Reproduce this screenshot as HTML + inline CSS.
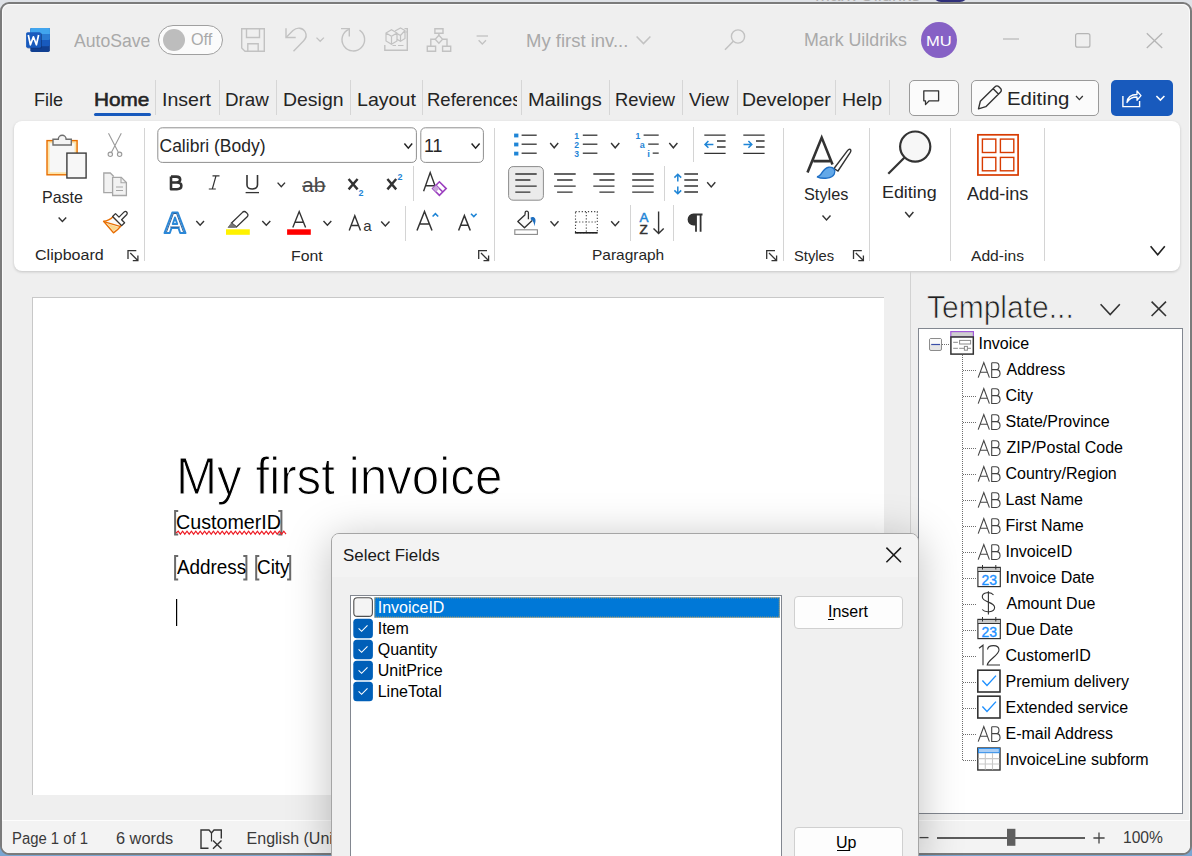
<!DOCTYPE html><html><head><meta charset="utf-8"><style>
*{margin:0;padding:0;box-sizing:border-box}
html,body{width:1192px;height:856px;overflow:hidden}
body{position:relative;background:#dfe2e7;font-family:"Liberation Sans",sans-serif}
.t{position:absolute;line-height:1;white-space:nowrap}
</style></head><body><div style="position:absolute;left:0px;top:0px;width:1192px;height:856px;background:#dfe2e7"></div>
<div style="position:absolute;left:0px;top:820px;width:1192px;height:36px;background:#7aa6d2"></div>
<div class="t" style="left:814.93px;top:-13.17px;font-size:17px;color:#b0b0b0;font-weight:normal;transform:scaleX(1.0722);transform-origin:0 0;">Mark Uildriks</div>
<div style="position:absolute;left:933px;top:-6px;width:35px;height:8px;border-radius:0 0 10px 10px;background:#2f2f7a"></div>
<div style="position:absolute;left:0px;top:2px;width:1192px;height:853px;background:#efefef;border:2px solid #7b7b7b;border-radius:9px"></div>
<div style="position:absolute;left:2px;top:4px;width:1188px;height:849px;border:1px solid #fbfbfb;border-radius:8px"></div>
<div class="t" style="left:73.50px;top:31.89px;font-size:18px;color:#a9a9a9;font-weight:normal;transform:scaleX(0.9779);transform-origin:0 0;">AutoSave</div>
<div style="position:absolute;left:158px;top:25px;width:65px;height:30px;border:1px solid #a0a0a0;border-radius:15px;background:#fbfbfb"></div>
<div style="position:absolute;left:163px;top:29px;width:22px;height:22px;border-radius:50%;background:#bdbdbd"></div>
<div class="t" style="left:190.59px;top:32.28px;font-size:16px;color:#a9a9a9;font-weight:normal;transform:scaleX(1.0143);transform-origin:0 0;">Off</div>
<div class="t" style="left:525.97px;top:31.79px;font-size:18px;color:#a9a9a9;font-weight:normal;transform:scaleX(1.0268);transform-origin:0 0;">My first inv...</div>
<div class="t" style="left:804.08px;top:32.41px;font-size:17.5px;color:#a9a9a9;font-weight:normal;transform:scaleX(1.0172);transform-origin:0 0;">Mark Uildriks</div>
<div style="position:absolute;left:921px;top:22px;width:36px;height:36px;border-radius:50%;background:#8661c5"></div>
<div class="t" style="left:926.43px;top:32.90px;font-size:15.5px;color:#fff;font-weight:normal;transform:scaleX(1.0682);transform-origin:0 0;">MU</div>
<svg style="position:absolute;left:0;top:0" width="1192" height="856" viewBox="0 0 1192 856"><rect x="30.3" y="27.9" width="19.6" height="24" rx="1.6" fill="#103f91"/><rect x="30.3" y="27.9" width="19.6" height="18.3" rx="1.6" fill="#185abd"/><rect x="30.3" y="27.9" width="19.6" height="12.2" rx="1.6" fill="#2b7cd3"/><path d="M31.9 27.9 H48.3 A1.6 1.6 0 0 1 49.9 29.5 V34 H30.3 V29.5 A1.6 1.6 0 0 1 31.9 27.9Z" fill="#41a5ee"/><rect x="27" y="33" width="15" height="15.4" rx="1.5" fill="#0c2f6e" opacity=".55"/><rect x="26.1" y="32.3" width="14.9" height="15.4" rx="1.5" fill="#185abd"/><path d="M28.3 35 L30.4 44.8 L33.4 36.8 L36.4 44.8 L38.6 35" stroke="#fff" stroke-width="1.7" fill="none" stroke-linejoin="round"/><path d="M241.7 28.7 H264.3 V51.3 H245 L241.7 48 Z" stroke="#c2c2c2" stroke-width="1.4" fill="none" /><path d="M246.5 28.7 V37.5 H259.5 V28.7" stroke="#c2c2c2" stroke-width="1.4" fill="none" /><path d="M247.8 51.3 V43.7 H258.2 V51.3" stroke="#c2c2c2" stroke-width="1.4" fill="none" /><path d="M286 28.3 V37.5 H295.7" stroke="#c2c2c2" stroke-width="1.4" fill="none" /><path d="M286.3 37.3 L293 30.5 C 297 27, 302.5 27.5, 305 31.5 C 307 35, 306 38.5, 303.5 41 L 293.5 51.2" stroke="#c2c2c2" stroke-width="1.4" fill="none" /><path d="M316.5 37.6 L320.2 41.3 L323.9 37.6" stroke="#c2c2c2" stroke-width="1.3" fill="none" /><path d="M359.5 30.2 A11.3 11.3 0 1 1 348.8 29.3" stroke="#c2c2c2" stroke-width="1.4" fill="none" /><path d="M341 28.6 H349.3 V36.6" stroke="#c2c2c2" stroke-width="1.4" fill="none" /><path d="M384.8 45 V50.2 H407.3 V28.6 H404.5" stroke="#c2c2c2" stroke-width="1.4" fill="none" /><path d="M386 33 L391.5 29.7 L397 33 V41 L391.5 44.3 L386 41 Z M386 33 L391.5 36.3 L397 33 M391.5 36.3 V44.3" stroke="#c2c2c2" stroke-width="1.2" fill="none" /><path d="M395 31 L400.5 27.9 L405 30.5 V38.5 L400.5 41.2 L397 39.2 M397 33.6 L400.5 35.5 L405 30.5 M400.5 35.5 V41.2" stroke="#c2c2c2" stroke-width="1.2" fill="none" /><path d="M392.5 45.5 H396 M398 45.5 H403.5" stroke="#c2c2c2" stroke-width="1.1" fill="none" /><path d="M405.5 32 H407" stroke="#c2c2c2" stroke-width="1.1" fill="none" /><path d="M434.9 28.7 H443 V33.3 H434.9 Z" stroke="#c2c2c2" stroke-width="1.4" fill="none" /><path d="M438.9 33.3 V35" stroke="#c2c2c2" stroke-width="1.4" fill="none" /><path d="M438.9 35.2 L442.6 39.2 L438.9 43.2 L435.2 39.2 Z" stroke="#c2c2c2" stroke-width="1.3" fill="none" /><path d="M430.8 46.2 V39.2 H435 M442.8 39.2 H447 V46.2" stroke="#c2c2c2" stroke-width="1.4" fill="none" /><path d="M427.3 46.3 H435.6 V51.3 H427.3 Z M442.6 46.3 H450.7 V51.3 H442.6 Z" stroke="#c2c2c2" stroke-width="1.4" fill="none" /><path d="M476.6 36 H488" stroke="#c2c2c2" stroke-width="1.3" fill="none" /><path d="M478.6 40.3 L482.3 44 L486 40.3" stroke="#c2c2c2" stroke-width="1.3" fill="none" /><path d="M636.6 36.4 L643.5 43.6 L650.4 36.4" stroke="#c2c2c2" stroke-width="1.5" fill="none" /><circle cx="738" cy="36.5" r="6.6" stroke="#c2c2c2" stroke-width="1.4" fill="none"/><path d="M733.3 41.2 L725 49.8" stroke="#c2c2c2" stroke-width="1.5" fill="none" /><path d="M1003 39 H1019" stroke="#b5b5b5" stroke-width="1.2" fill="none" /><rect x="1075.6" y="33.6" width="14.3" height="13.6" rx="2" stroke="#b5b5b5" stroke-width="1.2" fill="none"/><path d="M1146.8 33.3 L1162.2 48 M1162.2 33.3 L1146.8 48" stroke="#b5b5b5" stroke-width="1.3" fill="none" /></svg>
<div class="t" style="left:34.33px;top:91.07px;font-size:18.5px;color:#242424;font-weight:normal;transform:scaleX(0.9724);transform-origin:0 0;">File</div>
<div class="t" style="left:93.88px;top:91.07px;font-size:18.5px;color:#242424;font-weight:normal;transform:scaleX(1.1229);transform-origin:0 0;-webkit-text-stroke:0.55px #242424;">Home</div>
<div class="t" style="left:161.69px;top:91.07px;font-size:18.5px;color:#242424;font-weight:normal;transform:scaleX(1.0568);transform-origin:0 0;">Insert</div>
<div class="t" style="left:224.78px;top:91.07px;font-size:18.5px;color:#242424;font-weight:normal;transform:scaleX(1.0163);transform-origin:0 0;">Draw</div>
<div class="t" style="left:283.05px;top:91.07px;font-size:18.5px;color:#242424;font-weight:normal;transform:scaleX(1.0509);transform-origin:0 0;">Design</div>
<div class="t" style="left:357.04px;top:91.07px;font-size:18.5px;color:#242424;font-weight:normal;transform:scaleX(1.0593);transform-origin:0 0;">Layout</div>
<div style="position:absolute;left:420px;top:0;width:97.29999999999995px;height:856px;overflow:hidden"><div class="t" style="left:7.00px;top:91.07px;font-size:18.5px;color:#242424;font-weight:normal;">References</div></div>
<div class="t" style="left:527.91px;top:91.07px;font-size:18.5px;color:#242424;font-weight:normal;transform:scaleX(1.0866);transform-origin:0 0;">Mailings</div>
<div class="t" style="left:614.61px;top:91.07px;font-size:18.5px;color:#242424;font-weight:normal;transform:scaleX(0.9900);transform-origin:0 0;">Review</div>
<div class="t" style="left:689.40px;top:91.07px;font-size:18.5px;color:#242424;font-weight:normal;transform:scaleX(1.0050);transform-origin:0 0;">View</div>
<div class="t" style="left:741.95px;top:91.07px;font-size:18.5px;color:#242424;font-weight:normal;transform:scaleX(1.0518);transform-origin:0 0;">Developer</div>
<div class="t" style="left:841.85px;top:91.07px;font-size:18.5px;color:#242424;font-weight:normal;transform:scaleX(1.0541);transform-origin:0 0;">Help</div>
<div style="position:absolute;left:155px;top:80px;width:1px;height:35px;background:#d6d6d6"></div>
<div style="position:absolute;left:219px;top:80px;width:1px;height:35px;background:#d6d6d6"></div>
<div style="position:absolute;left:276px;top:80px;width:1px;height:35px;background:#d6d6d6"></div>
<div style="position:absolute;left:350px;top:80px;width:1px;height:35px;background:#d6d6d6"></div>
<div style="position:absolute;left:422px;top:80px;width:1px;height:35px;background:#d6d6d6"></div>
<div style="position:absolute;left:521px;top:80px;width:1px;height:35px;background:#d6d6d6"></div>
<div style="position:absolute;left:609px;top:80px;width:1px;height:35px;background:#d6d6d6"></div>
<div style="position:absolute;left:682px;top:80px;width:1px;height:35px;background:#d6d6d6"></div>
<div style="position:absolute;left:737px;top:80px;width:1px;height:35px;background:#d6d6d6"></div>
<div style="position:absolute;left:835px;top:80px;width:1px;height:35px;background:#d6d6d6"></div>
<div style="position:absolute;left:889px;top:80px;width:1px;height:35px;background:#d6d6d6"></div>
<div style="position:absolute;left:94px;top:113px;width:57px;height:3px;background:#185abd;border-radius:2px"></div>
<div style="position:absolute;left:909px;top:80px;width:50px;height:36px;border:1px solid #9a9a9a;border-radius:5px;background:#fbfbfb"></div>
<div style="position:absolute;left:971px;top:80px;width:128px;height:36px;border:1px solid #9a9a9a;border-radius:5px;background:#fbfbfb"></div>
<div class="t" style="left:1007.20px;top:90.17px;font-size:18.5px;color:#242424;font-weight:normal;transform:scaleX(1.1037);transform-origin:0 0;">Editing</div>
<div style="position:absolute;left:1111px;top:80px;width:62px;height:36px;border-radius:5px;background:#185abd"></div>
<svg style="position:absolute;left:0;top:0" width="1192" height="856" viewBox="0 0 1192 856"><path d="M923.8 90.8 H938.6 V100.8 H929.2 L925.5 104.6 V100.8 H923.8 Z" stroke="#333" stroke-width="1.3" fill="none" stroke-linejoin="round"/><path d="M978.5 108.8 L980.3 101.3 L995.3 86.6 A2.3 2.3 0 0 1 998.6 86.6 L1000.6 88.6 A2.3 2.3 0 0 1 1000.6 91.9 L985.8 106.7 Z M993.2 88.8 L998.4 94" stroke="#333" stroke-width="1.4" fill="none" stroke-linejoin="round"/><path d="M1076 96 L1079.4 99.6 L1082.8 96" stroke="#333" stroke-width="1.3" fill="none" /><path d="M1122.9 96 V106.6 H1139.6 V101" stroke="#fff" stroke-width="1.4" fill="none" /><path d="M1127 102.5 C 1127.5 96.5, 1131 94.5, 1137 94.5 V91 L1141 95.6 L1137 100.2 V97 C 1132.5 97, 1129 98.5, 1127 102.5 Z" stroke="#fff" stroke-width="1.3" fill="none" stroke-linejoin="round"/><path d="M1156.4 96 L1160.4 100 L1164.4 96" stroke="#fff" stroke-width="1.6" fill="none" /></svg>
<div style="position:absolute;left:14px;top:121px;width:1166px;height:150px;background:#fff;border-radius:8px;box-shadow:0 1px 3px rgba(0,0,0,.18)"></div>
<svg style="position:absolute;left:0;top:0" width="1192" height="856" viewBox="0 0 1192 856"><rect x="144.0" y="128" width="1" height="133" fill="#d4d4d4"/><rect x="494.0" y="128" width="1" height="133" fill="#d4d4d4"/><rect x="783.0" y="128" width="1" height="133" fill="#d4d4d4"/><rect x="869.0" y="128" width="1" height="133" fill="#d4d4d4"/><rect x="950.0" y="128" width="1" height="133" fill="#d4d4d4"/><rect x="1044.0" y="128" width="1" height="133" fill="#d4d4d4"/><rect x="413.0" y="166" width="1" height="35" fill="#d4d4d4"/><rect x="405.0" y="206" width="1" height="35" fill="#d4d4d4"/><rect x="693.0" y="127" width="1" height="35" fill="#d4d4d4"/><rect x="664.0" y="166" width="1" height="35" fill="#d4d4d4"/><rect x="630.0" y="205" width="1" height="36" fill="#d4d4d4"/><rect x="673.0" y="205" width="1" height="36" fill="#d4d4d4"/><rect x="47" y="140.6" width="30.1" height="34.2" fill="#fde3a7" stroke="#e86e00" stroke-width="1.4"/><rect x="49.6" y="143.2" width="25" height="29" fill="#f7f7f7"/><path d="M53 145 V139.2 H58.3 A3.9 3.9 0 0 1 66.1 139.2 H71.3 V145 Z" stroke="#6e6e6e" stroke-width="1.4" fill="#f4f4f4" /><rect x="66.9" y="153.1" width="19.2" height="24.9" fill="#f7f7f7" stroke="#3c3c3c" stroke-width="1.4"/><path d="M58.6 217.6 L62.400000000000006 221.5 L66.2 217.6" stroke="#333" stroke-width="1.4" fill="none" /><path d="M108.5 133.3 L118.3 152.2 M121.3 133.3 L111.5 152.2" stroke="#9a9a9a" stroke-width="1.1" fill="none" /><circle cx="110.3" cy="154.3" r="2.2" stroke="#9a9a9a" stroke-width="1.1" fill="#f7f7f7"/><circle cx="119.6" cy="154.3" r="2.2" stroke="#9a9a9a" stroke-width="1.1" fill="#f7f7f7"/><path d="M112.3 192.6 H103.8 V173 H110.3 L113.8 176.5 V192.6 Z" stroke="none" stroke-width="1.3" fill="#f2f2f2" /><path d="M112.3 192.6 H103.8 V173 H110.3 L113.8 176.5" stroke="#a6a6a6" stroke-width="1.3" fill="none" /><path d="M112.6 195.5 V177.4 H121.3 L126.4 182.5 V195.5 Z" stroke="#a6a6a6" stroke-width="1.3" fill="#f2f2f2" /><path d="M121 177.4 V182.8 H126.4" stroke="#a6a6a6" stroke-width="1.1" fill="none" /><path d="M116 187 H123 M116 190.5 H123" stroke="#a6a6a6" stroke-width="1.1" fill="none" /><path d="M103.6 221.3 C 107.5 221, 110.5 219.3, 113 216.8 L121.5 225.3 C 119 228.5, 116.3 231, 113.5 232.8 Z" stroke="#e86e00" stroke-width="1.4" fill="#fafafa" stroke-linejoin="round"/><path d="M106.5 223.3 L118.6 227.2 L113.6 231.2 Z" stroke="none" stroke-width="1.3" fill="#fbd68a" /><path d="M103.8 221.6 L120.8 226.6" stroke="#e86e00" stroke-width="1.3" fill="none" /><path d="M112.6 216.5 L115.5 213.6 L119 217.1 L124.2 211.9 A1.85 1.85 0 0 1 126.8 214.5 L121.6 219.7 L124.6 222.7 L121.7 225.6 Z" stroke="#333" stroke-width="1.3" fill="#fff" stroke-linejoin="round"/><rect x="157.8" y="127.8" width="258.6" height="34.6" rx="4.5" fill="#fff" stroke="#8f8f8f" stroke-width="1"/><rect x="420.8" y="127.8" width="62.6" height="34.6" rx="4.5" fill="#fff" stroke="#8f8f8f" stroke-width="1"/><path d="M404.4 143.6 L408.29999999999995 148.2 L412.2 143.6" stroke="#222" stroke-width="1.5" fill="none" /><path d="M471.6 143.6 L475.6 148.2 L479.6 143.6" stroke="#222" stroke-width="1.5" fill="none" /><path d="M171 176.6 H176.2 C 181.5 176.6, 181.5 182.5, 176.2 182.5 H171 M171 182.5 H177 C 182.8 182.5, 182.8 189.2, 177 189.2 H171 Z M171 176.6 V189.2" stroke="#333" stroke-width="2.6" fill="none" stroke-linejoin="round"/><path d="M212.5 175.8 H219.5 M208.8 189 H215.8 M216 175.8 L212.3 189" stroke="#333" stroke-width="1.2" fill="none" /><path d="M247 175 V185 C 247 190.3, 257.5 190.3, 257.5 185 V175" stroke="#333" stroke-width="1.6" fill="none" /><path d="M245.6 192.6 H259" stroke="#333" stroke-width="1.3" fill="none" /><path d="M277.6 182.6 L281.3 186.8 L285 182.6" stroke="#333" stroke-width="1.4" fill="none" /><text x="302" y="191.8" font-family="Liberation Sans" font-size="19.5" fill="#4a4a4a" textLength="23.4" lengthAdjust="spacingAndGlyphs">ab</text><path d="M302.2 186.2 H325.6" stroke="#444" stroke-width="1.3" fill="none" /><path d="M348.6 179 L357.6 189.4 M357.6 179 L348.6 189.4" stroke="#333" stroke-width="2.4" fill="none" /><text x="358.6" y="195.8" font-family="Liberation Sans" font-weight="bold" font-size="9" fill="#1f85d6">2</text><path d="M387.4 179 L396.2 189.4 M396.2 179 L387.4 189.4" stroke="#333" stroke-width="2.4" fill="none" /><text x="397.5" y="179.6" font-family="Liberation Sans" font-weight="bold" font-size="9" fill="#1f85d6">2</text><path d="M423.6 191.2 L430.2 172.6 L436.4 189.5 M425.6 185.8 H435" stroke="#333" stroke-width="1.4" fill="none" /><path d="M432.6 188.6 L439.4 181.8 L446.2 188.6 L439.4 195.4 Z M436 185.2 L442.8 192" stroke="#9b3fbf" stroke-width="1.6" fill="#fff" /><path d="M432.6 188.6 L436 185.2 L439.4 188.6 L436 192 Z" stroke="none" stroke-width="1.3" fill="#c9a6db" /><path d="M164.5 233 L172.3 212.5 H177.7 L185.5 233 H180.2 L178.5 228 H171.5 L169.8 233 Z M172.8 224 H177.2 L175 217.5 Z" stroke="#2b88d8" stroke-width="2" fill="#fff" stroke-linejoin="round"/><path d="M166.5 232 L173.4 213.5 H176.6 L183.5 232 M170.2 227 H179.8" stroke="#1c4f8c" stroke-width="0.9" fill="none" /><path d="M196.3 221 L200.15 225.3 L204 221" stroke="#333" stroke-width="1.4" fill="none" /><path d="M231.5 223 L242.5 212.4 A2.3 2.3 0 0 1 246 212.2 L247.2 213.4 A2.3 2.3 0 0 1 247.2 216.8 L236.5 227 Z" stroke="#333" stroke-width="1.3" fill="#fff" /><path d="M231.5 223 L228 227.4 H234.8 L236.5 227 Z" stroke="#666" stroke-width="0.8" fill="#777" /><rect x="226" y="229.3" width="23.8" height="5.5" fill="#fff200"/><path d="M262.3 221 L266.3 225.3 L270.3 221" stroke="#333" stroke-width="1.4" fill="none" /><path d="M292.8 227.6 L299.2 211.6 L305.6 227.6 M295 222.2 H303.4" stroke="#333" stroke-width="1.4" fill="none" /><rect x="287.1" y="229.3" width="23.7" height="5.5" fill="#ff0000"/><path d="M323.5 221 L327.4 225.3 L331.3 221" stroke="#333" stroke-width="1.4" fill="none" /><path d="M349.2 230.5 L354.8 215.8 L360.5 230.5 M351.2 225.5 H358.5" stroke="#333" stroke-width="1.4" fill="none" /><text x="363.3" y="230.6" font-family="Liberation Sans" font-size="15" fill="#333">a</text><path d="M381.2 221.5 L385.35 226 L389.5 221.5" stroke="#333" stroke-width="1.4" fill="none" /><path d="M417 230.5 L424.5 211.5 L432 230.5 M419.6 224 H429.4" stroke="#333" stroke-width="1.5" fill="none" /><path d="M432.6 216.5 L435.4 213.7 L438.2 216.5" stroke="#1f85d6" stroke-width="1.6" fill="none" /><path d="M458.6 230.5 L464.4 215.6 L470.3 230.5 M460.6 225.3 H468.3" stroke="#333" stroke-width="1.5" fill="none" /><path d="M471 213.8 L473.8 216.6 L476.6 213.8" stroke="#1f85d6" stroke-width="1.6" fill="none" /><path d="M128.0 259 V250.7 H136.3" stroke="#333" stroke-width="1.3" fill="none" /><path d="M130.3 253 L137.8 260.5 M132.8 260.6 H137.9 V255.5" stroke="#333" stroke-width="1.3" fill="none" /><path d="M478.7 259 V250.7 H487" stroke="#333" stroke-width="1.3" fill="none" /><path d="M481 253 L488.5 260.5 M483.5 260.6 H488.6 V255.5" stroke="#333" stroke-width="1.3" fill="none" /><path d="M766.7 259 V250.7 H775" stroke="#333" stroke-width="1.3" fill="none" /><path d="M769 253 L776.5 260.5 M771.5 260.6 H776.6 V255.5" stroke="#333" stroke-width="1.3" fill="none" /><path d="M853.5 259 V250.7 H861.8" stroke="#333" stroke-width="1.3" fill="none" /><path d="M855.8 253 L863.3 260.5 M858.3 260.6 H863.4 V255.5" stroke="#333" stroke-width="1.3" fill="none" /><rect x="514.1" y="133.6" width="4.3" height="3.8" fill="#1f85d6"/><rect x="514.1" y="142.6" width="4.3" height="3.8" fill="#1f85d6"/><rect x="514.1" y="151.7" width="4.3" height="3.8" fill="#1f85d6"/><path d="M521.6 135.2 H536.7" stroke="#333" stroke-width="1.3" fill="none" /><path d="M521.6 144.2 H536.7" stroke="#333" stroke-width="1.3" fill="none" /><path d="M521.6 153.2 H536.7" stroke="#333" stroke-width="1.3" fill="none" /><path d="M550.2 143 L554.2 147.8 L558.2 143" stroke="#333" stroke-width="1.4" fill="none" /><text x="574.3" y="139.2" font-family="Liberation Sans" font-weight="bold" font-size="8.6" fill="#1f85d6">1</text><text x="574.3" y="148.2" font-family="Liberation Sans" font-weight="bold" font-size="8.6" fill="#1f85d6">2</text><text x="574.3" y="157.3" font-family="Liberation Sans" font-weight="bold" font-size="8.6" fill="#1f85d6">3</text><path d="M582.8 135.2 H597.4" stroke="#333" stroke-width="1.3" fill="none" /><path d="M582.8 144.2 H597.4" stroke="#333" stroke-width="1.3" fill="none" /><path d="M582.8 153.2 H597.4" stroke="#333" stroke-width="1.3" fill="none" /><path d="M611.1 143 L615.2 147.8 L619.3 143" stroke="#333" stroke-width="1.4" fill="none" /><text x="635.4" y="139.2" font-family="Liberation Sans" font-weight="bold" font-size="8.6" fill="#1f85d6">1</text><text x="639.8" y="148" font-family="Liberation Sans" font-weight="bold" font-size="9" fill="#1f85d6">a</text><text x="647.3" y="157.3" font-family="Liberation Sans" font-weight="bold" font-size="9.5" fill="#1f85d6">i</text><path d="M643.6 135.2 H658.7 M648.2 144.2 H658.7 M652.7 153.2 H658.7" stroke="#333" stroke-width="1.3" fill="none" /><path d="M669.3 143 L673.3499999999999 147.8 L677.4 143" stroke="#333" stroke-width="1.4" fill="none" /><path d="M704.3 135.1 H725.6 M717 141 H725.6 M717 147 H725.6 M704.3 153.3 H725.6" stroke="#333" stroke-width="1.3" fill="none" /><path d="M713.4 144.4 H705 M708.4 141 L705 144.4 L708.4 147.8" stroke="#1f85d6" stroke-width="1.5" fill="none" /><path d="M743.3 135.1 H764.6 M756 141 H764.6 M756 147 H764.6 M743.3 153.3 H764.6" stroke="#333" stroke-width="1.3" fill="none" /><path d="M743.5 144.4 H751.8 M748.4 141 L751.8 144.4 L748.4 147.8" stroke="#1f85d6" stroke-width="1.5" fill="none" /><rect x="508.6" y="166.6" width="34.8" height="33.6" rx="4.5" fill="#ebebeb" stroke="#8c8c8c" stroke-width="1"/><path d="M515.3 174 H536.7 M515.3 180 H530.4 M515.3 186.1 H536.7 M515.3 192.1 H530.4" stroke="#333" stroke-width="1.4" fill="none" /><path d="M554.1 174 H575.7 M557.1 180 H572.6 M554.1 186.1 H575.7 M557.1 192.1 H572.6" stroke="#333" stroke-width="1.4" fill="none" /><path d="M593.3 174 H614.5 M599.4 180 H614.5 M593.3 186.1 H614.5 M599.4 192.1 H614.5" stroke="#333" stroke-width="1.4" fill="none" /><path d="M632.2 174 H653.7 M632.2 180 H653.7 M632.2 186.1 H653.7 M632.2 192.1 H653.7" stroke="#333" stroke-width="1.4" fill="none" /><path d="M677.8 174.6 V181.6 M674.4 177.6 L677.8 174.2 L681.2 177.6 M677.8 186.6 V193.6 M674.4 190.4 L677.8 193.8 L681.2 190.4" stroke="#1f85d6" stroke-width="1.5" fill="none" /><path d="M684.3 174 H698 M684.3 180 H698 M684.3 186 H698 M684.3 192 H698" stroke="#333" stroke-width="1.4" fill="none" /><path d="M707.2 182.2 L711.25 187 L715.3 182.2" stroke="#333" stroke-width="1.4" fill="none" /><path d="M525.1 214.8 L517.8 221.4 L524.5 227.8 L532.2 220.4" stroke="#333" stroke-width="1.4" fill="#fafafa" stroke-linejoin="round"/><path d="M525.1 214.8 V212.8 A1.65 1.65 0 0 1 528.4 212.8 V219.3" stroke="#333" stroke-width="1.3" fill="none" /><path d="M530.6 217.6 C 533.5 216, 536.2 218.3, 535.4 221.8 L534.4 226.2 C 534 223.2, 533.2 220.6, 530.8 219.6 Z" stroke="none" stroke-width="1.3" fill="#1e6fc0" /><rect x="514.8" y="229.8" width="22.6" height="4.6" fill="#fff" stroke="#8a8a8a" stroke-width="1.1"/><path d="M550.5 221.2 L554.5 225.6 L558.5 221.2" stroke="#333" stroke-width="1.4" fill="none" /><rect x="575.5" y="211.6" width="21.8" height="21" fill="none" stroke="#444" stroke-width="1.1" stroke-dasharray="1.2 1.9"/><path d="M586.3 212 V232 M576 222 H596.6" stroke="#444" stroke-width="1.1" fill="none" stroke-dasharray="1.2 1.9"/><path d="M574.9 232.8 H597.7" stroke="#222" stroke-width="1.6" fill="none" /><path d="M611.2 221.2 L615.2 225.6 L619.2 221.2" stroke="#333" stroke-width="1.4" fill="none" /><text x="639.4" y="221.6" font-family="Liberation Sans" font-size="13.5" fill="#1f85d6" stroke="#1f85d6" stroke-width="0.5">A</text><text x="639.6" y="234.4" font-family="Liberation Sans" font-size="13.5" fill="#333" stroke="#333" stroke-width="0.5">Z</text><path d="M658.6 211.4 V233.4 M653.5 228.5 L658.6 233.6 L663.7 228.5" stroke="#333" stroke-width="1.4" fill="none" /><path d="M696 214.5 V231.8 M700.6 214.5 V231.8 M702.5 214.5 H693.5 A5 5 0 0 0 693.5 224.5 H696" stroke="#333" stroke-width="1.8" fill="none" /><path d="M693.5 214.5 A5 5 0 0 0 693.5 224.5 H696 V214.5 Z" stroke="none" stroke-width="1.3" fill="#333" /><path d="M807.5 172.6 L821.7 137.6 L832.5 164.5 M813.5 161.1 H830" stroke="#333" stroke-width="2.6" fill="none" /><path d="M834 168.5 L847.5 150.6 C 849.5 148.2, 852 149.4, 850.3 152.4 L838 171 Z" stroke="#333" stroke-width="1.4" fill="#fff" /><path d="M817 176.8 C 822 176.8, 822 168, 828.8 167.2 C 834 166.7, 836 170.5, 834.3 174 C 832 178.5, 823 179.5, 817 176.8 Z" stroke="#1f6fc5" stroke-width="1.4" fill="#62a8e8" /><path d="M822.5 215.5 L826.5 220 L830.5 215.5" stroke="#333" stroke-width="1.4" fill="none" /><circle cx="915.2" cy="146.6" r="15.1" fill="#f7f7f7" stroke="#333" stroke-width="2.2"/><path d="M904.3 157.8 L888.3 173.8" stroke="#333" stroke-width="2.2" fill="none" /><path d="M905.2 212 L909.3 216.8 L913.4 212" stroke="#333" stroke-width="1.4" fill="none" /><rect x="977.9" y="134.8" width="40.2" height="40.2" fill="none" stroke="#d83b01" stroke-width="1.7"/><rect x="982.4" y="139.1" width="13.4" height="13.4" fill="none" stroke="#d83b01" stroke-width="1.4"/><rect x="1000.4" y="139.1" width="13.4" height="13.4" fill="none" stroke="#d83b01" stroke-width="1.4"/><rect x="982.4" y="157.4" width="13.4" height="13.4" fill="none" stroke="#d83b01" stroke-width="1.4"/><rect x="1000.4" y="157.4" width="13.4" height="13.4" fill="none" stroke="#d83b01" stroke-width="1.4"/><path d="M1150.6 246.2 L1157.6999999999998 254.8 L1164.8 246.2" stroke="#222" stroke-width="1.6" fill="none" /></svg>
<div class="t" style="left:41.93px;top:188.56px;font-size:16.5px;color:#262626;font-weight:normal;transform:scaleX(0.9707);transform-origin:0 0;">Paste</div>
<div class="t" style="left:35.36px;top:247.20px;font-size:15.5px;color:#262626;font-weight:normal;transform:scaleX(1.0354);transform-origin:0 0;">Clipboard</div>
<div class="t" style="left:159.50px;top:137.51px;font-size:17.5px;color:#262626;font-weight:normal;">Calibri (Body)</div>
<div class="t" style="left:423.98px;top:137.51px;font-size:17.5px;color:#262626;font-weight:normal;transform:scaleX(1.0188);transform-origin:0 0;">11</div>
<div class="t" style="left:291.34px;top:248.32px;font-size:15px;color:#262626;font-weight:normal;transform:scaleX(1.0552);transform-origin:0 0;">Font</div>
<div class="t" style="left:591.67px;top:247.32px;font-size:15px;color:#262626;font-weight:normal;transform:scaleX(1.0309);transform-origin:0 0;">Paragraph</div>
<div class="t" style="left:803.71px;top:186.46px;font-size:16.5px;color:#262626;font-weight:normal;transform:scaleX(0.9864);transform-origin:0 0;">Styles</div>
<div class="t" style="left:793.62px;top:248.12px;font-size:15px;color:#262626;font-weight:normal;transform:scaleX(0.9821);transform-origin:0 0;">Styles</div>
<div class="t" style="left:881.85px;top:183.63px;font-size:17px;color:#262626;font-weight:normal;transform:scaleX(1.0520);transform-origin:0 0;">Editing</div>
<div class="t" style="left:966.80px;top:185.61px;font-size:17.5px;color:#262626;font-weight:normal;transform:scaleX(1.0339);transform-origin:0 0;">Add-ins</div>
<div class="t" style="left:970.70px;top:247.70px;font-size:15.5px;color:#262626;font-weight:normal;transform:scaleX(1.0077);transform-origin:0 0;">Add-ins</div>
<div style="position:absolute;left:32px;top:297px;width:852px;height:498px;background:#fff;border-left:1px solid #c8c8c8;border-top:1px solid #c8c8c8"></div>
<div style="position:absolute;left:910px;top:271px;width:1px;height:550px;background:#d2d2d2"></div>
<div class="t" style="left:175.80px;top:450.46px;font-size:52px;color:#000;font-weight:normal;transform:scaleX(0.9491);transform-origin:0 0;-webkit-text-stroke:1.1px #fff;">My first invoice</div>
<svg style="position:absolute;left:0;top:0" width="1192" height="856" viewBox="0 0 1192 856"><path d="M178.2 511.1 H175.1 V534.6 H178.2" stroke="#6a6a6a" stroke-width="2" fill="none" /><path d="M278.3 511.1 H281.40000000000003 V534.6 H278.3" stroke="#6a6a6a" stroke-width="2" fill="none" /><path d="M178.2 555.9 H175.1 V579.4000000000001 H178.2" stroke="#6a6a6a" stroke-width="2" fill="none" /><path d="M243.3 555.9 H246.4 V579.4000000000001 H243.3" stroke="#6a6a6a" stroke-width="2" fill="none" /><path d="M259.3 555.9 H256.2 V579.4000000000001 H259.3" stroke="#6a6a6a" stroke-width="2" fill="none" /><path d="M287.1 555.9 H290.20000000000005 V579.4000000000001 H287.1" stroke="#6a6a6a" stroke-width="2" fill="none" /><path d="M176 533 L178.2 531.2 L180.4 534.2 L182.6 531.2 L184.8 534.2 L187.0 531.2 L189.2 534.2 L191.4 531.2 L193.6 534.2 L195.8 531.2 L198.0 534.2 L200.2 531.2 L202.4 534.2 L204.6 531.2 L206.8 534.2 L209.0 531.2 L211.2 534.2 L213.4 531.2 L215.6 534.2 L217.8 531.2 L220.0 534.2 L222.2 531.2 L224.4 534.2 L226.6 531.2 L228.8 534.2 L231.0 531.2 L233.2 534.2 L235.4 531.2 L237.6 534.2 L239.8 531.2 L242.0 534.2 L244.2 531.2 L246.4 534.2 L248.6 531.2 L250.8 534.2 L253.0 531.2 L255.2 534.2 L257.4 531.2 L259.6 534.2 L261.8 531.2 L264.0 534.2 L266.2 531.2 L268.4 534.2 L270.6 531.2 L272.8 534.2 L275.0 531.2 L277.2 534.2 L279.4 531.2 L281.6 534.2 L283.8 531.2 L286.0 534.2" stroke="#ee1c25" stroke-width="1.15" fill="none" /><rect x="176" y="599" width="1.2" height="27" fill="#000"/></svg>
<div class="t" style="left:175.79px;top:513.22px;font-size:19.5px;color:#000;font-weight:normal;transform:scaleX(1.0087);transform-origin:0 0;">CustomerID</div>
<div class="t" style="left:176.80px;top:558.32px;font-size:19.5px;color:#000;font-weight:normal;transform:scaleX(0.9676);transform-origin:0 0;">Address</div>
<div class="t" style="left:256.63px;top:558.32px;font-size:19.5px;color:#000;font-weight:normal;transform:scaleX(0.9697);transform-origin:0 0;">City</div>
<div class="t" style="left:927.13px;top:292.31px;font-size:31px;color:#1f1f1f;font-weight:normal;transform:scaleX(0.9676);transform-origin:0 0;-webkit-text-stroke:0.7px #efefef;">Template...</div>
<div style="position:absolute;left:918px;top:328px;width:265px;height:486px;background:#fff;border:1px solid #828790"></div>
<svg style="position:absolute;left:0;top:0" width="1192" height="856" viewBox="0 0 1192 856"><path d="M1100.6 304.3 L1110.2 314.6 L1119.8 304.3" stroke="#333" stroke-width="1.6" fill="none" /><path d="M1151.6 301.6 L1166 316 M1166 301.6 L1151.6 316" stroke="#333" stroke-width="1.6" fill="none" /><rect x="929.5" y="338.5" width="12" height="12" rx="1.5" fill="#e6e6e6" stroke="#8c8c8c" stroke-width="1"/><rect x="930" y="339" width="11" height="5.4" fill="#fafafa"/><path d="M931.2 344.5 H940" stroke="#3a4fa8" stroke-width="1.2" fill="none" /><path d="M942 344.5 H950" stroke="#6e6e6e" stroke-width="1" fill="none" stroke-dasharray="1 1"/><rect x="950.8" y="331.6" width="22.6" height="5.4" fill="#cfcfcf" stroke="#a259d9" stroke-width="1.2"/><rect x="950.9" y="337" width="22.4" height="17.1" fill="#fff" stroke="#333" stroke-width="1.5"/><path d="M953.2 342.3 H957.9 M953.2 348.3 H957.9 M959.2 348.3 H971" stroke="#8a8a8a" stroke-width="1" fill="none" /><rect x="959.6" y="340.4" width="11" height="3.6" fill="none" stroke="#8a8a8a" stroke-width="1"/><rect x="964.4" y="346.4" width="3" height="3.8" fill="#fff" stroke="#8a8a8a" stroke-width="1"/><path d="M962.5 355 V761" stroke="#6e6e6e" stroke-width="1" fill="none" stroke-dasharray="1 1"/><path d="M963 370.5 H977" stroke="#6e6e6e" stroke-width="1" fill="none" stroke-dasharray="1 1"/><path d="M978.2 377.6 L983.8 362.6 L989.4 377.6 M980.2 372.3 H987.4" stroke="#444" stroke-width="1.1" fill="none" /><path d="M991.7 362.7 V377.5 H996.4 C 1001.3 377.5, 1001.3 369.6, 996.2 369.6 H991.7 M991.7 362.7 H995.9 C 1000 362.7, 1000 369.6, 995.9 369.6" stroke="#444" stroke-width="1.1" fill="none" /><path d="M963 396.5 H977" stroke="#6e6e6e" stroke-width="1" fill="none" stroke-dasharray="1 1"/><path d="M978.2 403.6 L983.8 388.6 L989.4 403.6 M980.2 398.3 H987.4" stroke="#444" stroke-width="1.1" fill="none" /><path d="M991.7 388.7 V403.5 H996.4 C 1001.3 403.5, 1001.3 395.6, 996.2 395.6 H991.7 M991.7 388.7 H995.9 C 1000 388.7, 1000 395.6, 995.9 395.6" stroke="#444" stroke-width="1.1" fill="none" /><path d="M963 422.5 H977" stroke="#6e6e6e" stroke-width="1" fill="none" stroke-dasharray="1 1"/><path d="M978.2 429.6 L983.8 414.6 L989.4 429.6 M980.2 424.3 H987.4" stroke="#444" stroke-width="1.1" fill="none" /><path d="M991.7 414.7 V429.5 H996.4 C 1001.3 429.5, 1001.3 421.6, 996.2 421.6 H991.7 M991.7 414.7 H995.9 C 1000 414.7, 1000 421.6, 995.9 421.6" stroke="#444" stroke-width="1.1" fill="none" /><path d="M963 448.5 H977" stroke="#6e6e6e" stroke-width="1" fill="none" stroke-dasharray="1 1"/><path d="M978.2 455.6 L983.8 440.6 L989.4 455.6 M980.2 450.3 H987.4" stroke="#444" stroke-width="1.1" fill="none" /><path d="M991.7 440.7 V455.5 H996.4 C 1001.3 455.5, 1001.3 447.6, 996.2 447.6 H991.7 M991.7 440.7 H995.9 C 1000 440.7, 1000 447.6, 995.9 447.6" stroke="#444" stroke-width="1.1" fill="none" /><path d="M963 474.5 H977" stroke="#6e6e6e" stroke-width="1" fill="none" stroke-dasharray="1 1"/><path d="M978.2 481.6 L983.8 466.6 L989.4 481.6 M980.2 476.3 H987.4" stroke="#444" stroke-width="1.1" fill="none" /><path d="M991.7 466.7 V481.5 H996.4 C 1001.3 481.5, 1001.3 473.6, 996.2 473.6 H991.7 M991.7 466.7 H995.9 C 1000 466.7, 1000 473.6, 995.9 473.6" stroke="#444" stroke-width="1.1" fill="none" /><path d="M963 500.5 H977" stroke="#6e6e6e" stroke-width="1" fill="none" stroke-dasharray="1 1"/><path d="M978.2 507.6 L983.8 492.6 L989.4 507.6 M980.2 502.3 H987.4" stroke="#444" stroke-width="1.1" fill="none" /><path d="M991.7 492.7 V507.5 H996.4 C 1001.3 507.5, 1001.3 499.6, 996.2 499.6 H991.7 M991.7 492.7 H995.9 C 1000 492.7, 1000 499.6, 995.9 499.6" stroke="#444" stroke-width="1.1" fill="none" /><path d="M963 526.5 H977" stroke="#6e6e6e" stroke-width="1" fill="none" stroke-dasharray="1 1"/><path d="M978.2 533.6 L983.8 518.6 L989.4 533.6 M980.2 528.3 H987.4" stroke="#444" stroke-width="1.1" fill="none" /><path d="M991.7 518.7 V533.5 H996.4 C 1001.3 533.5, 1001.3 525.6, 996.2 525.6 H991.7 M991.7 518.7 H995.9 C 1000 518.7, 1000 525.6, 995.9 525.6" stroke="#444" stroke-width="1.1" fill="none" /><path d="M963 552.5 H977" stroke="#6e6e6e" stroke-width="1" fill="none" stroke-dasharray="1 1"/><path d="M978.2 559.6 L983.8 544.6 L989.4 559.6 M980.2 554.3 H987.4" stroke="#444" stroke-width="1.1" fill="none" /><path d="M991.7 544.7 V559.5 H996.4 C 1001.3 559.5, 1001.3 551.6, 996.2 551.6 H991.7 M991.7 544.7 H995.9 C 1000 544.7, 1000 551.6, 995.9 551.6" stroke="#444" stroke-width="1.1" fill="none" /><path d="M963 578.5 H977" stroke="#6e6e6e" stroke-width="1" fill="none" stroke-dasharray="1 1"/><rect x="977.9" y="567.4" width="22.4" height="19.2" fill="#fff" stroke="#333" stroke-width="1.2"/><rect x="978.5" y="568.0" width="21.2" height="3.5" fill="#c8c8c8"/><path d="M977.9 571.5 H1000.3" stroke="#333" stroke-width="1" fill="none" /><path d="M982.5 565.0 V569.5 M995.8 565.0 V569.5" stroke="#333" stroke-width="1" fill="none" /><text x="981.4" y="584.6" font-family="Liberation Sans" font-size="14" fill="#1e90ff" stroke="#1e90ff" stroke-width="0.35">23</text><path d="M963 604.5 H977" stroke="#6e6e6e" stroke-width="1" fill="none" stroke-dasharray="1 1"/><path d="M988.4 591.2 V614.6" stroke="#333" stroke-width="1.1" fill="none" /><path d="M993.5 595.0 C 991 591.5, 982 591.8, 982.3 597.0 C 982.6 602.8, 994.6 601.5, 994.6 607.5 C 994.6 612.5, 985 613.0, 982.2 609.5" stroke="#333" stroke-width="1.1" fill="none" /><path d="M963 630.5 H977" stroke="#6e6e6e" stroke-width="1" fill="none" stroke-dasharray="1 1"/><rect x="977.9" y="619.4" width="22.4" height="19.2" fill="#fff" stroke="#333" stroke-width="1.2"/><rect x="978.5" y="620.0" width="21.2" height="3.5" fill="#c8c8c8"/><path d="M977.9 623.5 H1000.3" stroke="#333" stroke-width="1" fill="none" /><path d="M982.5 617.0 V621.5 M995.8 617.0 V621.5" stroke="#333" stroke-width="1" fill="none" /><text x="981.4" y="636.6" font-family="Liberation Sans" font-size="14" fill="#1e90ff" stroke="#1e90ff" stroke-width="0.35">23</text><path d="M963 656.5 H977" stroke="#6e6e6e" stroke-width="1" fill="none" stroke-dasharray="1 1"/><path d="M979 648.2 L983 645.2 V665.2" stroke="#333" stroke-width="1.1" fill="none" /><path d="M987.5 649.5 C 988 644.5, 999 644.0, 999 650.0 C 999 655.0, 988 660.0, 987.2 665.0 H1000" stroke="#333" stroke-width="1.1" fill="none" /><path d="M963 682.5 H977" stroke="#6e6e6e" stroke-width="1" fill="none" stroke-dasharray="1 1"/><rect x="977.8" y="670.2" width="22.2" height="21.8" fill="#fff" stroke="#333" stroke-width="1.6"/><path d="M982.4 680.6 L987 685.4 L996 675.6" stroke="#1e90ff" stroke-width="1.4" fill="none" /><path d="M963 708.5 H977" stroke="#6e6e6e" stroke-width="1" fill="none" stroke-dasharray="1 1"/><rect x="977.8" y="696.2" width="22.2" height="21.8" fill="#fff" stroke="#333" stroke-width="1.6"/><path d="M982.4 706.6 L987 711.4 L996 701.6" stroke="#1e90ff" stroke-width="1.4" fill="none" /><path d="M963 734.5 H977" stroke="#6e6e6e" stroke-width="1" fill="none" stroke-dasharray="1 1"/><path d="M978.2 741.6 L983.8 726.6 L989.4 741.6 M980.2 736.3 H987.4" stroke="#444" stroke-width="1.1" fill="none" /><path d="M991.7 726.7 V741.5 H996.4 C 1001.3 741.5, 1001.3 733.6, 996.2 733.6 H991.7 M991.7 726.7 H995.9 C 1000 726.7, 1000 733.6, 995.9 733.6" stroke="#444" stroke-width="1.1" fill="none" /><path d="M963 760.5 H977" stroke="#6e6e6e" stroke-width="1" fill="none" stroke-dasharray="1 1"/><rect x="977.8" y="748.0" width="22.2" height="22" fill="#fff" stroke="#333" stroke-width="1.4"/><rect x="978.5" y="748.5" width="20.8" height="4.2" fill="#a9cdf4" stroke="#2a8ae8" stroke-width="1"/><path d="M985.3 753.0 V769.5 M992.5 753.0 V769.5 M978.5 758.6 H999.3 M978.5 764.0 H999.3" stroke="#c8c8c8" stroke-width="1.1" fill="none" /></svg>
<div class="t" style="left:978.50px;top:335.88px;font-size:16px;color:#000;font-weight:normal;">Invoice</div>
<div class="t" style="left:1006.50px;top:361.58px;font-size:16px;color:#000;font-weight:normal;">Address</div>
<div class="t" style="left:1005.50px;top:387.58px;font-size:16px;color:#000;font-weight:normal;">City</div>
<div class="t" style="left:1005.50px;top:413.58px;font-size:16px;color:#000;font-weight:normal;">State/Province</div>
<div class="t" style="left:1006.50px;top:439.58px;font-size:16px;color:#000;font-weight:normal;">ZIP/Postal Code</div>
<div class="t" style="left:1005.50px;top:465.58px;font-size:16px;color:#000;font-weight:normal;">Country/Region</div>
<div class="t" style="left:1005.50px;top:491.58px;font-size:16px;color:#000;font-weight:normal;">Last Name</div>
<div class="t" style="left:1005.50px;top:517.58px;font-size:16px;color:#000;font-weight:normal;">First Name</div>
<div class="t" style="left:1005.50px;top:543.58px;font-size:16px;color:#000;font-weight:normal;">InvoiceID</div>
<div class="t" style="left:1005.50px;top:569.58px;font-size:16px;color:#000;font-weight:normal;">Invoice Date</div>
<div class="t" style="left:1006.50px;top:595.58px;font-size:16px;color:#000;font-weight:normal;">Amount Due</div>
<div class="t" style="left:1005.50px;top:621.58px;font-size:16px;color:#000;font-weight:normal;">Due Date</div>
<div class="t" style="left:1005.50px;top:647.58px;font-size:16px;color:#000;font-weight:normal;">CustomerID</div>
<div class="t" style="left:1005.50px;top:673.58px;font-size:16px;color:#000;font-weight:normal;">Premium delivery</div>
<div class="t" style="left:1005.50px;top:699.58px;font-size:16px;color:#000;font-weight:normal;">Extended service</div>
<div class="t" style="left:1005.50px;top:725.58px;font-size:16px;color:#000;font-weight:normal;">E-mail Address</div>
<div class="t" style="left:1005.50px;top:751.58px;font-size:16px;color:#000;font-weight:normal;">InvoiceLine subform</div>
<div style="position:absolute;left:2px;top:820px;width:1188px;height:1px;background:#fdfdfd"></div>
<div style="position:absolute;left:2px;top:821px;width:1188px;height:32px;background:#f3f3f3;border-radius:0 0 8px 8px"></div>
<div class="t" style="left:11.87px;top:831.28px;font-size:16px;color:#3a3a3a;font-weight:normal;transform:scaleX(0.9275);transform-origin:0 0;">Page 1 of 1</div>
<div class="t" style="left:116.48px;top:831.28px;font-size:16px;color:#3a3a3a;font-weight:normal;transform:scaleX(1.0204);transform-origin:0 0;">6 words</div>
<div class="t" style="left:246.60px;top:831.28px;font-size:16px;color:#3a3a3a;font-weight:normal;">English (United States)</div>
<div class="t" style="left:1123.03px;top:830.38px;font-size:16px;color:#3a3a3a;font-weight:normal;transform:scaleX(0.9750);transform-origin:0 0;">100%</div>
<svg style="position:absolute;left:0;top:0" width="1192" height="856" viewBox="0 0 1192 856"><path d="M208.5 848.3 H201 V830 H209 L211.5 833 L214 830 H221.3 V838.5" stroke="#333" stroke-width="1.4" fill="none" /><path d="M211.5 833 V841.5" stroke="#333" stroke-width="1.2" fill="none" /><path d="M213 840.5 L221.5 848.8 M221.5 840.5 L213 848.8" stroke="#333" stroke-width="1.4" fill="none" /><path d="M919.5 837.6 H928.5" stroke="#444" stroke-width="1.3" fill="none" /><rect x="937" y="837" width="148" height="2" fill="#5c5c5c"/><rect x="1007" y="828.8" width="8.4" height="17" fill="#5e5e5e"/><path d="M1093.4 838 H1104.6 M1099 832.6 V843.4" stroke="#444" stroke-width="1.3" fill="none" /></svg>
<div style="position:absolute;left:331px;top:533px;width:588px;height:330px;background:#f0f0f0;border:1px solid #a5a5a5;border-radius:8px 8px 0 0;box-shadow:0 6px 44px rgba(0,0,0,.25)"></div>
<div style="position:absolute;left:332px;top:534px;width:586px;height:43px;background:#f3f3f3;border-radius:7px 7px 0 0"></div>
<div class="t" style="left:342.91px;top:546.63px;font-size:17px;color:#1a1a1a;font-weight:normal;transform:scaleX(0.9948);transform-origin:0 0;">Select Fields</div>
<div style="position:absolute;left:350px;top:595px;width:432px;height:270px;background:#fff;border:1px solid #828790"></div>
<div style="position:absolute;left:794px;top:596px;width:109px;height:33px;background:#fdfdfd;border:1px solid #d0d0d0;border-radius:4px"></div>
<div class="t" style="left:828.00px;top:604.18px;font-size:16px;color:#000;font-weight:normal;">Insert</div>
<div style="position:absolute;left:794px;top:827px;width:109px;height:40px;background:#fdfdfd;border:1px solid #d0d0d0;border-radius:4px"></div>
<div class="t" style="left:836.00px;top:835.48px;font-size:16px;color:#000;font-weight:normal;">Up</div>
<svg style="position:absolute;left:0;top:0" width="1192" height="856" viewBox="0 0 1192 856"><path d="M886.4 547.6 L901 562.2 M901 547.6 L886.4 562.2" stroke="#1a1a1a" stroke-width="1.5" fill="none" /><rect x="374.4" y="597.3" width="405.4" height="20.4" fill="#0078d7"/><rect x="374.9" y="597.8" width="404.4" height="19.4" fill="none" stroke="#f2a93b" stroke-width="1" stroke-dasharray="1 1"/><rect x="353.8" y="597.8" width="18.6" height="18.6" rx="3.5" fill="#f4f4f4" stroke="#4f4f4f" stroke-width="1.1"/><rect x="353.3" y="618.8" width="19.6" height="19.4" rx="3.5" fill="#005fb8"/><path d="M358.6 628.3 L361.6 631.3 L367.5 625.3" stroke="#fff" stroke-width="1.1" fill="none" /><rect x="353.3" y="639.8" width="19.6" height="19.4" rx="3.5" fill="#005fb8"/><path d="M358.6 649.3 L361.6 652.3 L367.5 646.3" stroke="#fff" stroke-width="1.1" fill="none" /><rect x="353.3" y="660.8" width="19.6" height="19.4" rx="3.5" fill="#005fb8"/><path d="M358.6 670.3 L361.6 673.3 L367.5 667.3" stroke="#fff" stroke-width="1.1" fill="none" /><rect x="353.3" y="681.8" width="19.6" height="19.4" rx="3.5" fill="#005fb8"/><path d="M358.6 691.3 L361.6 694.3 L367.5 688.3" stroke="#fff" stroke-width="1.1" fill="none" /></svg>
<div class="t" style="left:377.70px;top:599.88px;font-size:16px;color:#fff;font-weight:normal;">InvoiceID</div>
<div class="t" style="left:377.70px;top:620.88px;font-size:16px;color:#000;font-weight:normal;">Item</div>
<div class="t" style="left:377.70px;top:641.88px;font-size:16px;color:#000;font-weight:normal;">Quantity</div>
<div class="t" style="left:377.70px;top:662.88px;font-size:16px;color:#000;font-weight:normal;">UnitPrice</div>
<div class="t" style="left:377.70px;top:683.88px;font-size:16px;color:#000;font-weight:normal;">LineTotal</div>
<div style="position:absolute;left:828px;top:619px;width:5.5px;height:1.2px;background:#000"></div>
<div style="position:absolute;left:837px;top:850px;width:12.5px;height:1.2px;background:#000"></div></body></html>
